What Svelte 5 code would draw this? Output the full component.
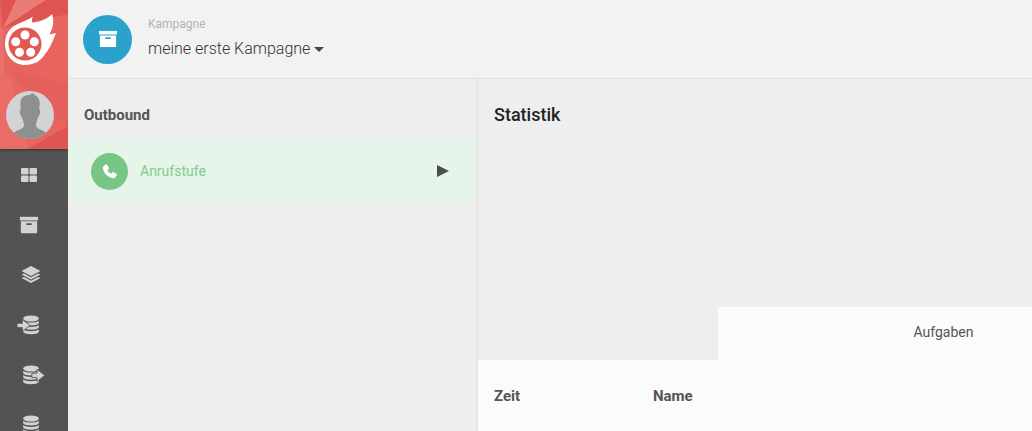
<script>
  const navItems = [
    { id: 'dashboard', label: 'Dashboard' },
    { id: 'archive', label: 'Kampagnen' },
    { id: 'layers', label: 'Ebenen' },
    { id: 'import', label: 'Import' },
    { id: 'export', label: 'Export' },
    { id: 'database', label: 'Daten' },
  ];
  const columns = ['Zeit', 'Name'];
</script>

{#snippet archive()}
  <path d="M2 3h20v4H2z" />
  <path fill-rule="evenodd" d="M3 8h18v12a1 1 0 0 1-1 1H4a1 1 0 0 1-1-1zM9 10v2h6v-2z" />
{/snippet}

{#snippet cylinder()}
  <ellipse cx="11" cy="4" rx="9" ry="3.500" />
  <path d="M2 6.500c2 3 16 3 18 0v3c-2 3.400-16 3.400-18 0z" />
  <path d="M2 11.500c2 3 16 3 18 0v3c-2 3.400-16 3.400-18 0z" />
  <path d="M2 16.500c2 3 16 3 18 0v3c-2 3.400-16 3.400-18 0z" />
{/snippet}

<div class="app">
  <aside>
    <div class="brand">
      <svg class="facets" viewBox="0 0 68 149" preserveAspectRatio="none" aria-hidden="true">
        <path fill="#e7645f" d="M0 0h68v149H0z" />
        <path fill="#df5451" d="M0 0h17L3 28z" />
        <path fill="#eb7b77" d="M16 0h30L3 28z" />
        <path fill="#de5451" d="M46 0h22v14L3 28z" />
        <path fill="#e9716c" d="M0 28h3l1 42-4 8z" />
        <path fill="#e4605c" d="M4 70 68 84v43L13 75z" />
        <path fill="#e96c67" d="M4 70 13 83l15 66H0V78z" />
        <path fill="#df5552" d="M28 149l40-23v23z" />
      </svg>
      <svg class="logo" viewBox="0 0 68 72" aria-hidden="true">
        <path fill="#fff" d="M5 44c0-8 3-14 9-18 6-4 13-5 19-9.500-1 2-1.500 4-1 6C39 22 48 19 52 14c2.500 7 1 14-2.500 20.500L56 33C53 40 51 47 45 54c-4 7-11 11-20 11C14 65 5 56 5 44z" />
        <circle cx="25" cy="44" r="16.500" fill="#e35853" />
        <g fill="#fff">
          <circle cx="25" cy="35" r="4.500" /><circle cx="34.300" cy="41.700" r="4.500" />
          <circle cx="30.700" cy="52.300" r="4.500" /><circle cx="19.500" cy="52.300" r="4.500" />
          <circle cx="15.700" cy="41.700" r="4.500" />
        </g>
      </svg>
      <svg class="avatar" viewBox="0 0 48 48" role="img" aria-label="Profil">
        <clipPath id="face"><circle cx="24" cy="24" r="24" /></clipPath>
        <g clip-path="url(#face)">
          <path fill="#d3d3d3" d="M0 0h48v48H0z" />
          <path fill="#8e8f8f" d="M15 18C13 9 16 4 23 4c2-1 4-2 6-1l-1 1c5 1 7 7 5 14 2 1 1 7-1 8-1 4-2 6-2 9 2 4 8 4 12 8v5H6v-5c4-4 10-4 12-8 0-3-1-5-2-9-2-1-3-7-1-8z" />
        </g>
      </svg>
    </div>
    <nav>
      {#each navItems as item}
        <a href="#{item.id}" aria-label={item.label}>
          {#if item.id === 'dashboard'}
            <svg viewBox="0 0 20 20"><rect x="2" y="3" width="7.500" height="6.500" rx="1" /><rect x="10.500" y="3" width="7.500" height="6.500" rx="1" /><rect x="2" y="10.500" width="7.500" height="6.500" rx="1" /><rect x="10.500" y="10.500" width="7.500" height="6.500" rx="1" /></svg>
          {:else if item.id === 'archive'}
            <svg viewBox="1 2 22 20">{@render archive()}</svg>
          {:else if item.id === 'layers'}
            <svg class="shifted" viewBox="0 0 20 20"><path d="M10 1l9.500 5-9.500 5L.5 6z" /><path d="M.5 9.500 3 8.500l7 3.700 7-3.700 2.500 1L10 14.500z" /><path d="M.5 13 3 12l7 3.700 7-3.700 2.500 1L10 18z" /></svg>
          {:else if item.id === 'import'}
            <svg class="wide" viewBox="-5 0 32 23"><g>{@render cylinder()}</g><path class="arrow" d="M-5 9.500H1V5L10 12 1 19v-4.500h-6z" /></svg>
          {:else if item.id === 'export'}
            <svg class="wide" viewBox="-5 0 32 23"><g>{@render cylinder()}</g><path class="arrow" d="M12 9.500h6V5l9 7-9 7v-4.500h-6z" /></svg>
          {:else}
            <svg class="wide" viewBox="-5 0 32 23">{@render cylinder()}</svg>
          {/if}
        </a>
      {/each}
    </nav>
  </aside>

  <div class="page">
    <header>
      <span class="badge campaign"><svg viewBox="1 2 22 20" aria-hidden="true">{@render archive()}</svg></span>
      <div class="title">
        <span class="caption">Kampagne</span>
        <button type="button" class="picker">meine erste Kampagne<i></i></button>
      </div>
    </header>

    <div class="columns">
      <section class="stages">
        <h2>Outbound</h2>
        <a class="stage" href="#anrufstufe">
          <span class="badge call">
            <svg viewBox="0 0 24 24" aria-hidden="true"><path d="M3.500 4.500 6.500 2c.7-.5 1.500-.4 2 .3l2.500 4c.4.7.3 1.500-.3 2L9 9.800c1 2.300 3 4.300 5.300 5.300l1.600-1.700c.6-.6 1.300-.7 2-.3l4 2.500c.7.500.8 1.300.3 2l-2.500 3c-.6.8-1.600 1.100-2.600.9C9.500 20 4 14.500 2.600 7.100c-.2-1 .1-2 .9-2.600z" /></svg>
          </span>
          <span class="name">Anrufstufe</span>
          <svg class="play" viewBox="0 0 12 12" aria-hidden="true"><path d="M0 0l12 6-12 6z" /></svg>
        </a>
      </section>

      <main>
        <h1>Statistik</h1>
        <div class="tabs"><button type="button">Aufgaben</button></div>
        <div class="sheet">
          <table>
            <thead><tr>{#each columns as column}<th>{column}</th>{/each}</tr></thead>
          </table>
        </div>
      </main>
    </div>
  </div>
</div>

<style>
  :global(body) { margin: 0; overflow: hidden; }
  .app {
    display: flex;
    height: 100vh;
    overflow: hidden;
    background: #eee;
    color: #555;
    font: 14px/20px Roboto, sans-serif;
  }
  svg { display: block; fill: currentColor; }
  button { padding: 0; border: 0; background: none; font: inherit; color: inherit; }
  a { color: inherit; text-decoration: none; }
  h1, h2 { margin: 0; }
  aside { flex: none; width: 68px; overflow: hidden; background: #535353; }
  .brand { display: grid; height: 149px; box-shadow: 0 1px 3px #333; }
  .brand > svg { grid-area: 1 / 1; }
  .facets { width: 100%; height: 149px; }
  .logo { width: 68px; height: 72px; }
  .avatar { width: 48px; height: 48px; align-self: end; margin: 0 0 10px 6px; }
  nav { padding-top: 1px; }
  nav a { display: flex; height: 50px; padding-left: 19px; align-items: center; color: #d3d3d3; }
  nav svg { width: 20px; height: 20px; }
  nav svg.shifted { margin-left: 2px; }
  nav svg.wide { width: 28px; height: 20px; margin-left: -2px; }
  .arrow { stroke: #535353; stroke-width: 1; }
  .page { flex: 1; min-width: 0; display: flex; flex-direction: column; }
  header {
    display: flex;
    align-items: center;
    gap: 16px;
    height: 78px;
    padding-left: 15px;
    background: #f2f2f2;
    border-bottom: 1px solid #e0e0e0;
  }
  .badge { display: grid; place-items: center; border-radius: 50%; color: #fff; flex: none; }
  .campaign { width: 49px; height: 49px; background: #2ba2cc; }
  .campaign svg { width: 20px; height: 18px; }
  .title { display: flex; flex-direction: column; align-items: flex-start; padding-bottom: 4px; }
  .caption { font-size: 12px; line-height: 24px; color: #b3b3b3; }
  .picker { display: flex; align-items: center; gap: 4px; font-size: 16px; font-weight: 300; line-height: 26px; color: #333; }
  .picker i { border: 5px solid transparent; border-top-color: #444; border-bottom: 0; }
  .columns { flex: 1; display: flex; min-height: 0; }
  .stages { flex: none; width: 408px; border-right: 2px solid #e6e6e6; }
  h2 { padding: 26px 16px 14px; font-size: 15px; line-height: 20px; font-weight: 700; }
  .stage { display: flex; align-items: center; height: 64px; padding: 0 27px 0 23px; background: #e6f4e9; color: #7fcc8c; }
  .call { width: 37px; height: 37px; background: #77c686; }
  .call svg { width: 17px; height: 17px; }
  .name { flex: 1; padding-left: 12px; }
  .play { width: 12px; height: 12px; color: #4c4c52; }
  main { flex: 1; min-width: 0; overflow: hidden; display: flex; flex-direction: column; }
  h1 { padding: 24px 16px; font-size: 18px; line-height: 24px; font-weight: 500; color: #222; }
  .tabs { display: flex; margin-top: auto; padding-left: 240px; }
  .tabs button { flex: none; width: 451px; padding: 15px 0 18px; background: #fbfbfb; }
  .sheet { height: 71px; background: #fbfbfb; }
  table { border-collapse: collapse; }
  th { min-width: 143px; padding: 26px 0 25px 16px; font-size: 15px; text-align: left; font-weight: 700; }
</style>
